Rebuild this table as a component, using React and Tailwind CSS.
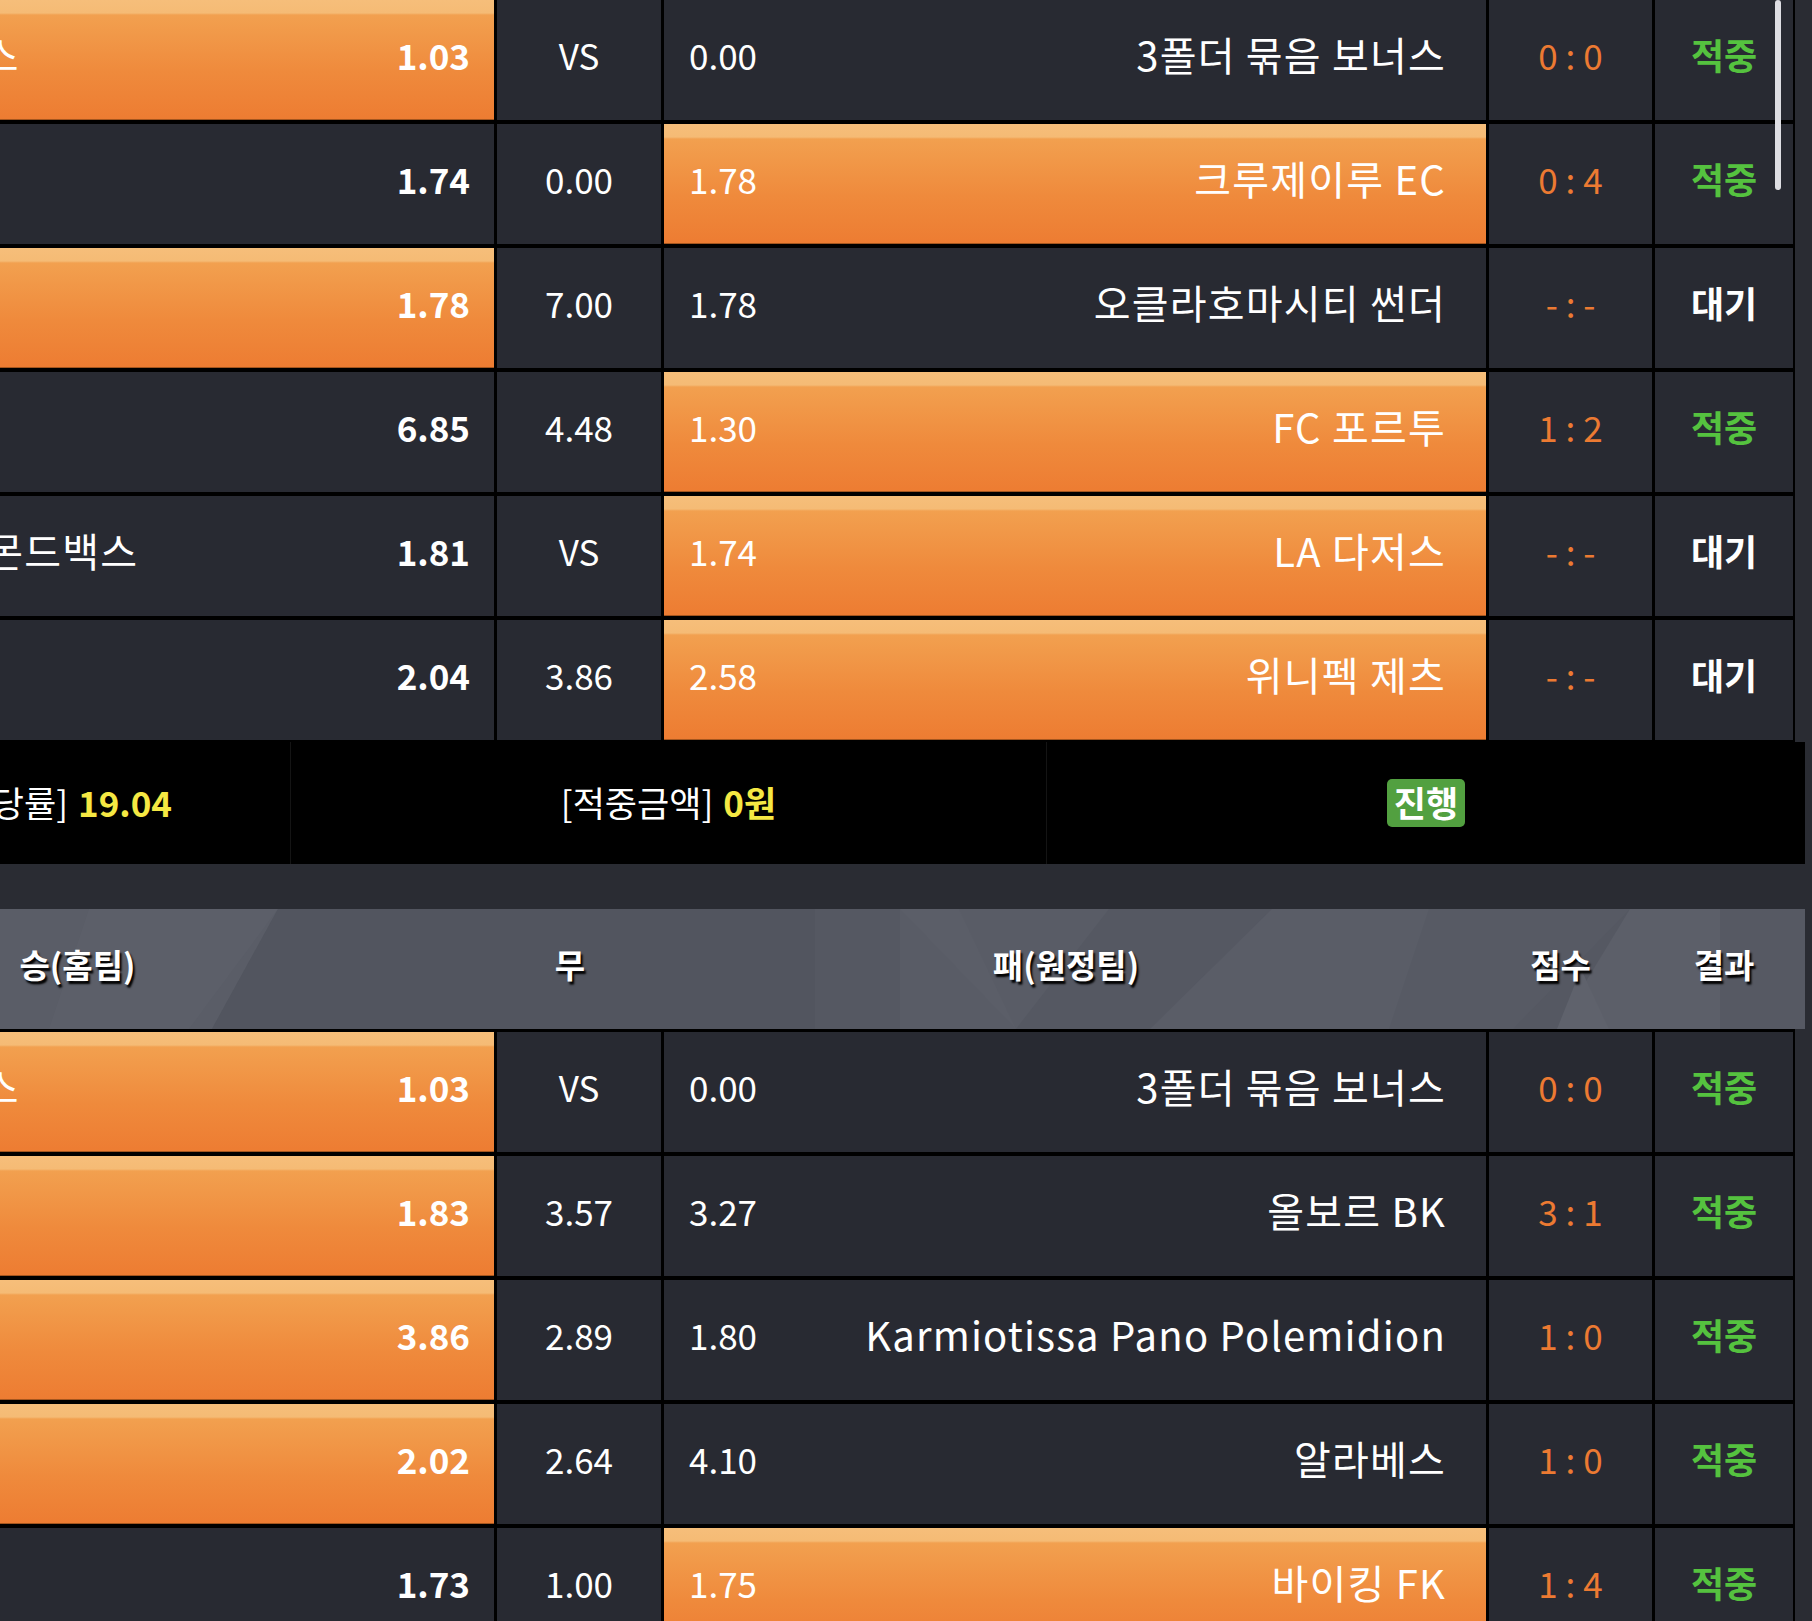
import React from "react";

const sec1 = [
  { home: "3폴더 묶음 보너스", h: "1.03", d: "VS", a: "0.00", away: "3폴더 묶음 보너스", s: "0 : 0", r: "적중", w: "home" },
  { home: "바스쿠 다가마", h: "1.74", d: "0.00", a: "1.78", away: "크루제이루 EC", s: "0 : 4", r: "적중", w: "away" },
  { home: "덴버 너기츠", h: "1.78", d: "7.00", a: "1.78", away: "오클라호마시티 썬더", s: "- : -", r: "대기", w: "home" },
  { home: "비토리아 SC", h: "6.85", d: "4.48", a: "1.30", away: "FC 포르투", s: "1 : 2", r: "적중", w: "away" },
  { home: "애리조나 다이아몬드백스", h: "1.81", d: "VS", a: "1.74", away: "LA 다저스", s: "- : -", r: "대기", w: "away" },
  { home: "LA 킹스", h: "2.04", d: "3.86", a: "2.58", away: "위니펙 제츠", s: "- : -", r: "대기", w: "away" },
];

const sec2 = [
  { home: "3폴더 묶음 보너스", h: "1.03", d: "VS", a: "0.00", away: "3폴더 묶음 보너스", s: "0 : 0", r: "적중", w: "home" },
  { home: "오르후스", h: "1.83", d: "3.57", a: "3.27", away: "올보르 BK", s: "3 : 1", r: "적중", w: "home" },
  { home: "AEL 리마솔", h: "3.86", d: "2.89", a: "1.80", away: "Karmiotissa Pano Polemidion", s: "1 : 0", r: "적중", w: "home" },
  { home: "헤타페", h: "2.02", d: "2.64", a: "4.10", away: "알라베스", s: "1 : 0", r: "적중", w: "home" },
  { home: "오드 그렌란", h: "1.73", d: "1.00", a: "1.75", away: "바이킹 FK", s: "1 : 4", r: "적중", w: "away" },
];

const orange =
  "bg-[linear-gradient(to_bottom,#f6be7a_0px,#f5bb75_13px,#f2a04f_15px,#ef8a3c_60%,#ed7c32_100%)] shadow-[inset_0_-1px_0_#a4561f]";
const dark = "bg-[#282a32]";

function Row({ m }) {
  return (
    <>
      <div className={`h-[120px] flex items-center justify-between pl-[41px] pr-[24px] pb-[12px] whitespace-nowrap ${m.w === "home" ? orange : dark}`}>
        <span className="text-[40px] tracking-[1.2px] text-white leading-none">{m.home}</span>
        <span className="text-[35px] font-bold text-white leading-none">{m.h}</span>
      </div>
      <div className={`h-[120px] flex items-center justify-center pb-[12px] ${dark}`}>
        <span className="text-[35px] text-white leading-none">{m.d}</span>
      </div>
      <div className={`h-[120px] flex items-center justify-between pl-[25px] pr-[40px] pb-[12px] whitespace-nowrap ${m.w === "away" ? orange : dark}`}>
        <span className="text-[35px] text-white leading-none">{m.a}</span>
        <span className="text-[40px] tracking-[1.2px] text-white leading-none">{m.away}</span>
      </div>
      <div className={`h-[120px] flex items-center justify-center pb-[12px] ${dark}`}>
        <span className="text-[35px] text-[#ec7a32] leading-none whitespace-pre">{m.s}</span>
      </div>
      <div className={`h-[120px] flex items-center justify-center pb-[12px] ${dark}`}>
        <span className={`text-[36px] font-bold leading-none ${m.r === "적중" ? "text-[#55c23f]" : "text-white"}`}>{m.r}</span>
      </div>
    </>
  );
}

function Table({ rows, top }) {
  return (
    <div className={`grid grid-cols-[825px_164px_822px_163px_138px] gap-x-[3px] gap-y-[4px] bg-black pr-[2px] w-[2126px] ${top ? "border-t-[3px] border-black" : "border-b-[2px] border-black"}`}>
      {rows.map((m, i) => (
        <Row key={i} m={m} />
      ))}
    </div>
  );
}

function HeaderBg() {
  return (
    <svg className="absolute inset-0 w-full h-full" viewBox="0 0 2136 120" preserveAspectRatio="none">
      <rect width="2136" height="120" fill="#555862" />
      <polygon points="0,0 609,0 543,120 0,120" fill="#5a5d67" />
      <polygon points="420,0 609,0 520,120 380,120" fill="#5c5f69" />
      <polygon points="609,0 1146,0 1146,120 543,120" fill="#52555f" />
      <polygon points="1231,0 1440,0 1347,120 1231,120" fill="#595c66" />
      <polygon points="1231,0 1290,0 1347,120" fill="#5b5e68" />
      <polygon points="1603,0 1900,0 1844,120 1481,120" fill="#5a5d67" />
      <polygon points="1760,0 1961,0 1844,120 1720,120" fill="#575a64" />
      <polygon points="1961,0 2051,0 2051,120 1888,120" fill="#5c5f69" />
      <polygon points="2051,0 2136,0 2136,120 2051,120" fill="#565963" />
      <polygon points="1888,120 1912,60 1940,120" fill="#5f626c" />
    </svg>
  );
}

export default function App() {
  const hs = "[text-shadow:2px_3px_2px_#000]";
  return (
    <div className="relative w-[1812px] h-[1621px] overflow-hidden bg-[#2a2c33] font-['Noto_Sans_CJK_KR','Noto_Sans',sans-serif]">
      <div className="ml-[-331px] w-[2136px]">
        <Table rows={sec1} />

        <div className="flex h-[122px] w-[2136px] bg-black text-white">
          <div className="w-[622px] flex items-center justify-end pr-[118px] pb-[4px] border-r border-[#141414] whitespace-nowrap">
            <span className="text-[35px] leading-none">[배팅금액]</span>
            <span className="text-[35px] font-bold leading-none text-[#f5e843] ml-[10px]">10,000원</span>
            <span className="text-[35px] leading-none ml-[40px]">[배당률]</span>
            <span className="text-[35px] font-bold leading-none text-[#f5e843] ml-[10px]">19.04</span>
          </div>
          <div className="w-[756px] flex items-center justify-center pb-[4px] border-r border-[#141414] whitespace-nowrap">
            <span className="text-[35px] leading-none">[적중금액]</span>
            <span className="text-[35px] font-bold leading-none text-[#f5e843] ml-[10px]">0원</span>
          </div>
          <div className="flex-1 flex items-center justify-center">
            <span className="flex items-center justify-center w-[78px] h-[48px] rounded-[5px] bg-[#52a040] text-[35px] font-bold leading-none text-white pb-[3px]">진행</span>
          </div>
        </div>

        <div className="h-[45px]" />

        <div className="relative h-[120px] w-[2136px]">
          <HeaderBg />
          <div className="relative grid grid-cols-[825px_164px_822px_163px_138px] gap-x-[3px] h-full text-white font-bold text-[33px] pb-[8px]">
            <div className={`flex items-center justify-center pr-[8px] ${hs}`}>승(홈팀)</div>
            <div className={`flex items-center justify-center pr-[18px] ${hs}`}>무</div>
            <div className={`flex items-center justify-center pr-[18px] ${hs}`}>패(원정팀)</div>
            <div className={`flex items-center justify-center pr-[20px] ${hs}`}>점수</div>
            <div className={`flex items-center justify-center ${hs}`}>결과</div>
          </div>
        </div>

        <Table rows={sec2} top />
      </div>

      <div className="absolute left-[1775px] top-0 w-[6px] h-[190px] rounded-full bg-[#dedee3]" />
    </div>
  );
}
